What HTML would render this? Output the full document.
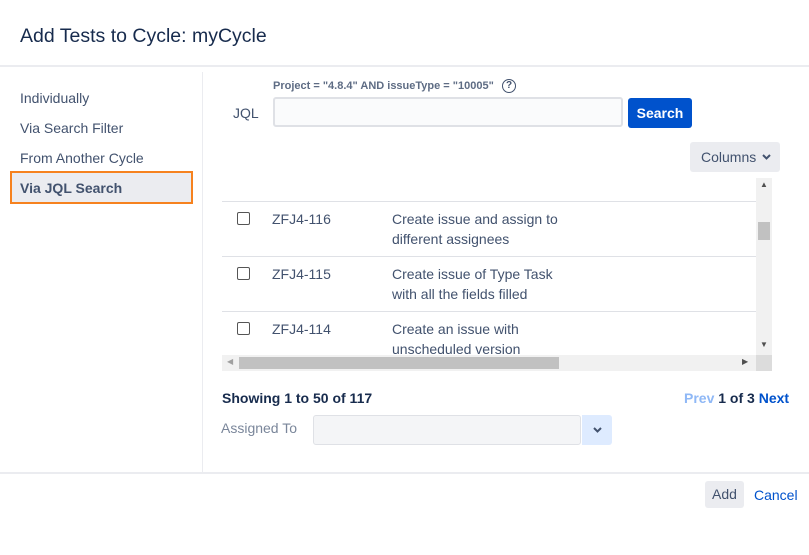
<!DOCTYPE html>
<html><head><meta charset="utf-8"><style>
*{margin:0;padding:0;box-sizing:border-box}
body{width:809px;height:555px;background:#fff;font-family:"Liberation Sans",sans-serif;color:#42526e;position:relative;overflow:hidden;font-size:14px}
.a{position:absolute;white-space:nowrap}
.cb{position:absolute;width:13px;height:13px;border:1.5px solid #555;border-radius:2px;background:#fff}
.sep{position:absolute;left:222px;width:534px;height:1px;background:#dfe1e6}
</style></head><body>
<div class="a" style="left:20px;top:25px;font-size:19.5px;color:#172b4d">Add Tests to Cycle: myCycle</div>
<div class="a" style="left:0;top:65px;width:809px;height:2px;background:#ebecf0"></div>
<div class="a" style="left:202px;top:72px;width:1px;height:400px;background:#ebecf0"></div>
<div class="a" style="left:20px;top:90px">Individually</div>
<div class="a" style="left:20px;top:120px">Via Search Filter</div>
<div class="a" style="left:20px;top:150px">From Another Cycle</div>
<div class="a" style="left:10px;top:171px;width:183px;height:33px;background:#ebecf0;border:2px solid #f6821f"></div>
<div class="a" style="left:20px;top:180px;font-weight:bold;color:#42526e">Via JQL Search</div>
<div class="a" style="left:273px;top:80px;font-size:11px;font-weight:bold;color:#5e6c84">Project = "4.8.4" AND issueType = "10005"</div>
<div class="a" style="left:502px;top:79px;width:14px;height:14px;border:1.5px solid #42526e;border-radius:50%;font-size:10px;line-height:11px;text-align:center;font-weight:bold">?</div>
<div class="a" style="left:233px;top:105px">JQL</div>
<div class="a" style="left:273px;top:97px;width:350px;height:30px;background:#fafbfc;border:2px solid #dfe1e6;border-radius:3px"></div>
<div class="a" style="left:628px;top:98px;width:64px;height:30px;background:#0052cc;border-radius:3px;color:#fff;font-weight:bold;text-align:center;line-height:30px">Search</div>
<div class="a" style="left:690px;top:142px;width:90px;height:30px;background:#ebecf0;border-radius:3px;line-height:30px;padding-left:11px">Columns <svg width="9" height="6" viewBox="0 0 9 6" style="vertical-align:2px;margin-left:2px"><path d="M1 1L4.5 4.5L8 1" stroke="#42526e" stroke-width="2" fill="none"/></svg></div>
<div class="a" style="left:756px;top:178px;width:16px;height:177px;background:#f1f1f1"></div>
<div class="a" style="left:758px;top:222px;width:12px;height:18px;background:#c1c1c1"></div>
<div class="a" style="left:760px;top:180px;font-size:8px;color:#505050">&#9650;</div>
<div class="a" style="left:760px;top:340px;font-size:8px;color:#505050">&#9660;</div>
<div class="a" style="left:222px;top:355px;width:534px;height:16px;background:#f1f1f1"></div>
<div class="a" style="left:756px;top:355px;width:16px;height:16px;background:#dcdcdc"></div>
<div class="a" style="left:239px;top:357px;width:320px;height:12px;background:#c1c1c1"></div>
<div class="a" style="left:227px;top:357px;font-size:8px;color:#a0a0a0">&#9664;</div>
<div class="a" style="left:742px;top:357px;font-size:8px;color:#505050">&#9654;</div>
<div class="sep" style="top:201px"></div>
<div class="sep" style="top:256px"></div>
<div class="sep" style="top:311px"></div>
<div class="cb" style="left:237px;top:212px"></div>
<div class="a" style="left:272px;top:211px">ZFJ4-116</div>
<div class="a" style="left:392px;top:209px;line-height:20px">Create issue and assign to<br>different assignees</div>
<div class="cb" style="left:237px;top:267px"></div>
<div class="a" style="left:272px;top:266px">ZFJ4-115</div>
<div class="a" style="left:392px;top:264px;line-height:20px">Create issue of Type Task<br>with all the fields filled</div>
<div class="cb" style="left:237px;top:322px"></div>
<div class="a" style="left:272px;top:321px">ZFJ4-114</div>
<div class="a" style="left:392px;top:319px;line-height:20px;height:36px;overflow:hidden">Create an issue with<br>unscheduled version</div>
<div class="a" style="left:222px;top:390px;font-weight:bold;color:#172b4d">Showing 1 to 50 of 117</div>
<div class="a" style="left:684px;top:390px;font-weight:bold;color:#172b4d"><span style="color:#8fb8f6">Prev</span> 1 of 3 <span style="color:#0052cc">Next</span></div>
<div class="a" style="left:221px;top:420px;color:#7a869a">Assigned To</div>
<div class="a" style="left:313px;top:415px;width:268px;height:30px;background:#f4f5f7;border:1px solid #dfe1e6;border-radius:3px"></div>
<div class="a" style="left:582px;top:415px;width:30px;height:30px;background:#deebff;border-radius:0 3px 3px 0"><svg width="9" height="6" viewBox="0 0 9 6" style="position:absolute;left:11px;top:12px"><path d="M1 1L4.5 4.5L8 1" stroke="#42526e" stroke-width="2" fill="none"/></svg></div>
<div class="a" style="left:0;top:472px;width:809px;height:2px;background:#ebecf0"></div>
<div class="a" style="left:705px;top:481px;width:39px;height:27px;background:#ebecf0;border-radius:3px;text-align:center;line-height:27px">Add</div>
<div class="a" style="left:754px;top:487px;color:#0052cc">Cancel</div>
</body></html>
